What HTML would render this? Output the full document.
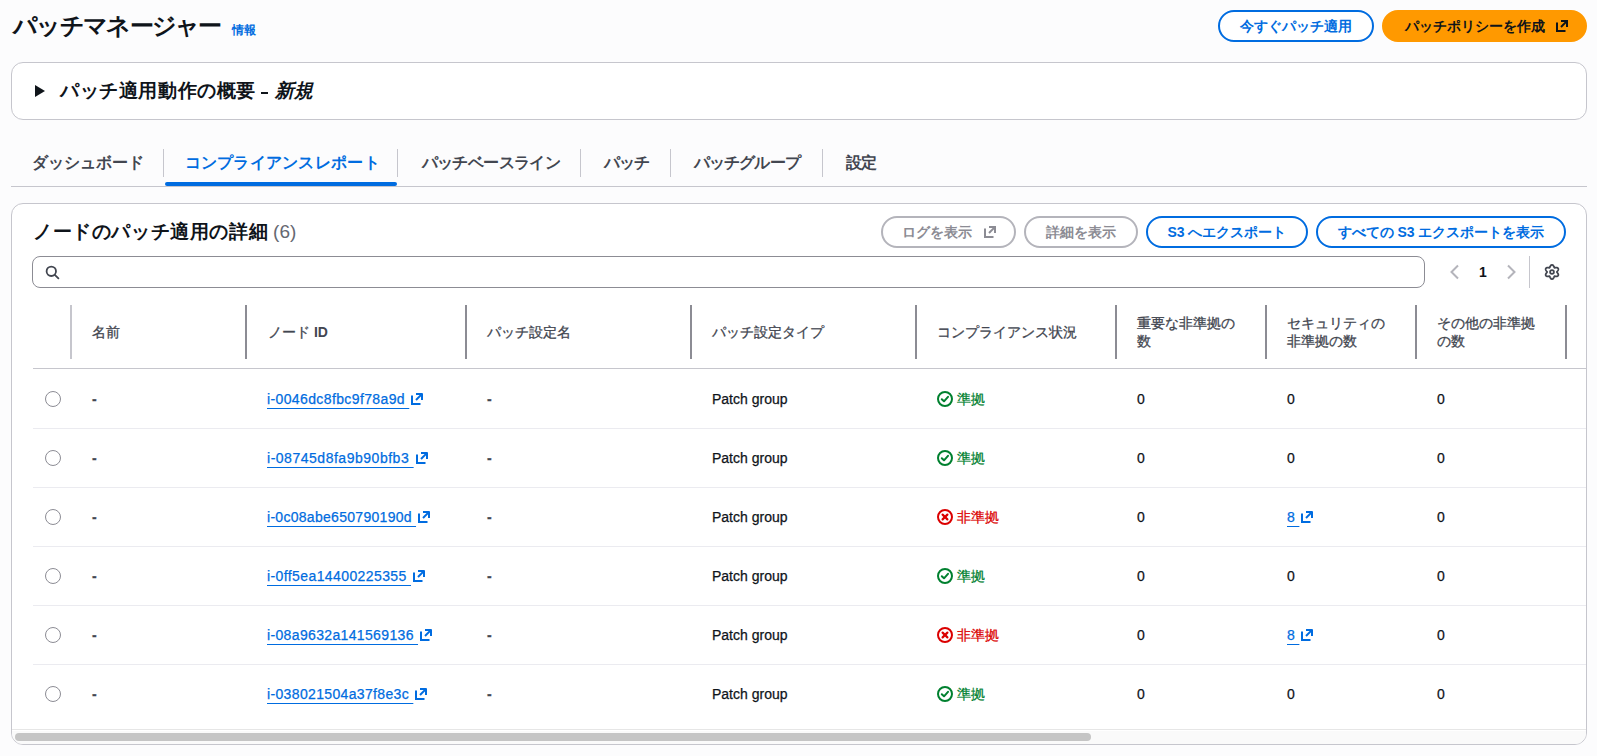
<!DOCTYPE html>
<html lang="ja">
<head>
<meta charset="utf-8">
<style>
*{box-sizing:border-box;margin:0;padding:0}
html,body{width:1597px;height:756px;overflow:hidden;background:#fcfcfd;font-family:"Liberation Sans",sans-serif;color:#0f141a}
.abs{position:absolute;white-space:nowrap}
.title{left:13px;top:12px;font-size:24px;font-weight:700;line-height:28px;color:#0f141a;letter-spacing:-1.7px}
.info{left:232px;top:22px;font-size:12px;font-weight:700;color:#006ce0;line-height:16px}
.btn{position:absolute;height:32px;border-radius:16px;border:2px solid #006ce0;color:#006ce0;font-size:14px;font-weight:700;line-height:28px;text-align:center;background:#fff;white-space:nowrap}
.btn.primary{background:#ff9900;border-color:#ff9900;color:#0f141a}
.btn.dis{border-color:#b4b4bb;color:#8c8c94;background:#fff}
.btn .ext{vertical-align:-1px}
.box{position:absolute;background:#fff;border:1px solid #c6c6cd;border-radius:12px}
.exp{left:11px;top:62px;width:1576px;height:58px}
.tri{position:absolute;left:35px;top:85px;width:0;height:0;border-top:6px solid transparent;border-bottom:6px solid transparent;border-left:10px solid #0f141a}
.h2{font-size:19px;font-weight:700;line-height:24px;color:#0f141a;letter-spacing:0.6px}
.tab{position:absolute;top:151px;font-size:16px;font-weight:700;color:#424650;line-height:24px;white-space:nowrap}
.tab.act{color:#006ce0}
.tabdiv{position:absolute;top:149px;width:1px;height:28px;background:#c6c6cd}
.tabline{position:absolute;left:11px;top:186px;width:1576px;height:1px;background:#c6c6cd}
.tabul{position:absolute;left:165px;top:182px;width:232px;height:4px;border-radius:2px;background:#006ce0}
.main{left:11px;top:203px;width:1576px;height:542px;overflow:hidden}
.search{position:absolute;left:32px;top:256px;width:1393px;height:32px;border:1px solid #8c8c94;border-radius:8px;background:#fff}
.th{position:absolute;font-size:14px;font-weight:400;-webkit-text-stroke:0.3px #424650;color:#424650;line-height:18px;white-space:nowrap}
.cdiv{position:absolute;top:305px;width:2px;height:54px;background:#8c8c94}
.hline{position:absolute;left:33px;top:368px;width:1553px;height:1px;background:#c6c6cd}
.rline{position:absolute;left:33px;width:1553px;height:1px;background:#ebebf0}
.td{position:absolute;font-size:14px;line-height:20px;color:#0f141a;white-space:nowrap;-webkit-text-stroke:0.25px currentColor}
.td.lk{color:#006ce0}
.td .ext{vertical-align:-1px;margin-left:2px}
.radio{position:absolute;left:45px;width:16px;height:16px;border:1px solid #8c8c94;border-radius:50%;background:#fff}
.lnk{color:#006ce0;text-decoration:underline;text-underline-offset:4px;letter-spacing:0.35px}
.st svg{vertical-align:-3px;margin-right:4px}
.st.ok{color:#00802f}
.st.ng{color:#db0000}
.sbar{position:absolute;left:12px;top:729px;width:1574px;height:15px;border-top:1px solid #e6e6e6;background:linear-gradient(#fff 0,#fff 1px,#fafafa 1px);border-radius:0 0 11px 11px}
.sthumb{position:absolute;left:15px;top:733px;width:1076px;height:8px;border-radius:4px;background:#c5c5c5}
.td.dash{font-weight:700;color:#424650}

</style>
</head>
<body>

<div class="abs title">パッチマネージャー</div>
<div class="abs info">情報</div>
<div class="btn" style="left:1218px;top:10px;width:156px">今すぐパッチ適用</div>
<div class="btn primary" style="left:1382px;top:10px;width:205px;text-align:left;padding-left:20.5px">パッチポリシーを作成<svg class="ext" style="margin-left:11px" width="12" height="12" viewBox="0 0 12 12"><path d="M1 2.5V11H9.5" fill="none" stroke="currentColor" stroke-width="2"/><path d="M5 1H11V7" fill="none" stroke="currentColor" stroke-width="2"/><path d="M10.6 1.4L5 7" fill="none" stroke="currentColor" stroke-width="2"/></svg></div>

<div class="box exp"></div>
<div class="tri"></div>
<div class="abs h2" style="left:60px;top:79px">パッチ適用動作の概要<span style="display:inline-block;width:6.5px;height:2.5px;background:#0f141a;vertical-align:3px;margin:0 7px 0 5px"></span><i>新規</i></div>

<div class="tab" style="left:31.5px">ダッシュボード</div>
<div class="tabdiv" style="left:163px"></div>
<div class="tab act" style="left:184.5px;letter-spacing:0.28px">コンプライアンスレポート</div>
<div class="tabdiv" style="left:397px"></div>
<div class="tab" style="left:421.5px;letter-spacing:-0.58px">パッチベースライン</div>
<div class="tabdiv" style="left:580px"></div>
<div class="tab" style="left:604px;letter-spacing:-1px">パッチ</div>
<div class="tabdiv" style="left:670px"></div>
<div class="tab" style="left:693.5px;letter-spacing:-0.8px">パッチグループ</div>
<div class="tabdiv" style="left:822px"></div>
<div class="tab" style="left:845.5px;letter-spacing:-1px">設定</div>
<div class="tabline"></div>
<div class="tabul"></div>

<div class="box main"></div>
<div class="abs h2" style="left:33px;top:220px">ノードのパッチ適用の詳細 <span style="font-weight:400;color:#656871;letter-spacing:0;margin-left:-1px">(6)</span></div>
<div class="btn dis" style="left:881px;top:216px;width:135px;text-align:left;padding-left:19px">ログを表示<svg class="ext" style="margin-left:12px" width="12" height="12" viewBox="0 0 12 12"><path d="M1 2.5V11H9.5" fill="none" stroke="currentColor" stroke-width="2"/><path d="M5 1H11V7" fill="none" stroke="currentColor" stroke-width="2"/><path d="M10.6 1.4L5 7" fill="none" stroke="currentColor" stroke-width="2"/></svg></div>
<div class="btn dis" style="left:1024px;top:216px;width:114px">詳細を表示</div>
<div class="btn" style="left:1146px;top:216px;width:162px">S3 へエクスポート</div>
<div class="btn" style="left:1316px;top:216px;width:250px">すべての S3 エクスポートを表示</div>
<div class="search"></div>
<svg class="abs" style="left:45px;top:265px" width="16" height="16" viewBox="0 0 16 16"><circle cx="6.3" cy="6.3" r="4.7" fill="none" stroke="#424650" stroke-width="1.8"/><path d="M9.8 9.8L13.4 13.4" stroke="#424650" stroke-width="1.8" stroke-linecap="round"/></svg>
<svg class="abs" style="left:1447px;top:264px" width="16" height="16" viewBox="0 0 16 16"><path d="M11 1.5L4.5 8L11 14.5" fill="none" stroke="#b4b4bb" stroke-width="2"/></svg>
<div class="abs" style="left:1479px;top:262px;font-size:14px;font-weight:700;line-height:20px;color:#0f141a">1</div>
<svg class="abs" style="left:1503px;top:264px" width="16" height="16" viewBox="0 0 16 16"><path d="M5 1.5L11.5 8L5 14.5" fill="none" stroke="#b4b4bb" stroke-width="2"/></svg>
<div class="abs" style="left:1529px;top:256px;width:1px;height:32px;background:#c6c6cd"></div>
<svg class="abs gear" style="left:1544px;top:264px;overflow:visible" width="16" height="16" viewBox="0 0 16 16"><path d="M12.90 8.00 L12.96 8.17 L13.07 8.35 L13.21 8.55 L13.37 8.75 L13.54 8.98 L13.71 9.21 L13.88 9.47 L14.03 9.73 L14.15 10.00 L14.25 10.27 L14.31 10.55 L14.33 10.82 L14.31 11.08 L14.25 11.32 L14.15 11.55 L14.00 11.75 L13.82 11.93 L13.61 12.07 L13.36 12.19 L13.09 12.27 L12.81 12.33 L12.51 12.35 L12.21 12.36 L11.91 12.34 L11.62 12.31 L11.34 12.27 L11.08 12.24 L10.84 12.21 L10.63 12.21 L10.45 12.24 L10.33 12.38 L10.23 12.56 L10.13 12.78 L10.03 13.03 L9.92 13.29 L9.80 13.55 L9.67 13.82 L9.52 14.08 L9.34 14.33 L9.15 14.55 L8.95 14.74 L8.72 14.89 L8.49 15.01 L8.25 15.08 L8.00 15.10 L7.75 15.08 L7.51 15.01 L7.28 14.89 L7.05 14.74 L6.85 14.55 L6.66 14.33 L6.48 14.08 L6.33 13.82 L6.20 13.55 L6.08 13.29 L5.97 13.03 L5.87 12.78 L5.77 12.56 L5.67 12.38 L5.55 12.24 L5.37 12.21 L5.16 12.21 L4.92 12.24 L4.66 12.27 L4.38 12.31 L4.09 12.34 L3.79 12.36 L3.49 12.35 L3.19 12.33 L2.91 12.27 L2.64 12.19 L2.39 12.07 L2.18 11.93 L2.00 11.75 L1.85 11.55 L1.75 11.32 L1.69 11.08 L1.67 10.82 L1.69 10.55 L1.75 10.27 L1.85 10.00 L1.97 9.73 L2.12 9.47 L2.29 9.21 L2.46 8.98 L2.63 8.75 L2.79 8.55 L2.93 8.35 L3.04 8.17 L3.10 8.00 L3.04 7.83 L2.93 7.65 L2.79 7.45 L2.63 7.25 L2.46 7.02 L2.29 6.79 L2.12 6.53 L1.97 6.27 L1.85 6.00 L1.75 5.73 L1.69 5.45 L1.67 5.18 L1.69 4.92 L1.75 4.68 L1.85 4.45 L2.00 4.25 L2.18 4.07 L2.39 3.93 L2.64 3.81 L2.91 3.73 L3.19 3.67 L3.49 3.65 L3.79 3.64 L4.09 3.66 L4.38 3.69 L4.66 3.73 L4.92 3.76 L5.16 3.79 L5.37 3.79 L5.55 3.76 L5.67 3.62 L5.77 3.44 L5.87 3.22 L5.97 2.97 L6.08 2.71 L6.20 2.45 L6.33 2.18 L6.48 1.92 L6.66 1.67 L6.85 1.45 L7.05 1.26 L7.28 1.11 L7.51 0.99 L7.75 0.92 L8.00 0.90 L8.25 0.92 L8.49 0.99 L8.72 1.11 L8.95 1.26 L9.15 1.45 L9.34 1.67 L9.52 1.92 L9.67 2.18 L9.80 2.45 L9.92 2.71 L10.03 2.97 L10.13 3.22 L10.23 3.44 L10.33 3.62 L10.45 3.76 L10.63 3.79 L10.84 3.79 L11.08 3.76 L11.34 3.73 L11.62 3.69 L11.91 3.66 L12.21 3.64 L12.51 3.65 L12.81 3.67 L13.09 3.73 L13.36 3.81 L13.61 3.93 L13.82 4.07 L14.00 4.25 L14.15 4.45 L14.25 4.68 L14.31 4.92 L14.33 5.18 L14.31 5.45 L14.25 5.73 L14.15 6.00 L14.03 6.27 L13.88 6.53 L13.71 6.79 L13.54 7.02 L13.37 7.25 L13.21 7.45 L13.07 7.65 L12.96 7.83Z" fill="none" stroke="#424650" stroke-width="1.8" stroke-linejoin="round"/><circle cx="8" cy="8" r="1.9" fill="none" stroke="#424650" stroke-width="1.8"/></svg>

<div class="th" style="left:92px;top:323px">名前</div>
<div class="th" style="left:268px;top:323px">ノード <b style="-webkit-text-stroke:0">ID</b></div>
<div class="th" style="left:487px;top:323px">パッチ設定名</div>
<div class="th" style="left:712px;top:323px">パッチ設定タイプ</div>
<div class="th" style="left:937px;top:323px">コンプライアンス状況</div>
<div class="th" style="left:1137px;top:314px">重要な非準拠の<br>数</div>
<div class="th" style="left:1287px;top:314px">セキュリティの<br>非準拠の数</div>
<div class="th" style="left:1437px;top:314px">その他の非準拠<br>の数</div>
<div class="cdiv" style="left:70px;background:#c6c6cd"></div>
<div class="cdiv" style="left:245px"></div>
<div class="cdiv" style="left:465px"></div>
<div class="cdiv" style="left:690px"></div>
<div class="cdiv" style="left:915px"></div>
<div class="cdiv" style="left:1115px"></div>
<div class="cdiv" style="left:1265px"></div>
<div class="cdiv" style="left:1415px"></div>
<div class="cdiv" style="left:1565px"></div>
<div class="hline"></div>

<div class="rline" style="top:428px"></div>
<div class="radio" style="top:391px"></div>
<div class="td dash" style="left:92px;top:389px">-</div>
<div class="td lk" style="left:267px;top:389px"><span class="lnk" style="letter-spacing:0.38px">i-0046dc8fbc9f78a9d </span><svg class="ext" width="12" height="12" viewBox="0 0 12 12"><path d="M1 2.5V11H9.5" fill="none" stroke="currentColor" stroke-width="2" stroke-linecap="butt"/><path d="M5 1H11V7" fill="none" stroke="currentColor" stroke-width="2" stroke-linejoin="round"/><path d="M10.6 1.4L5 7" fill="none" stroke="currentColor" stroke-width="2"/></svg></div>
<div class="td dash" style="left:487px;top:389px">-</div>
<div class="td" style="left:712px;top:389px">Patch group</div>
<div class="td st ok" style="left:937px;top:389px"><svg width="16" height="16" viewBox="0 0 16 16"><circle cx="8" cy="8" r="7" fill="none" stroke="currentColor" stroke-width="2"/><path d="M4.8 8.2L7 10.3L11 5.8" fill="none" stroke="currentColor" stroke-width="2" stroke-linecap="round" stroke-linejoin="round"/></svg><span>準拠</span></div>
<div class="td" style="left:1137px;top:389px">0</div>
<div class="td" style="left:1287px;top:389px">0</div>
<div class="td" style="left:1437px;top:389px">0</div>
<div class="rline" style="top:487px"></div>
<div class="radio" style="top:450px"></div>
<div class="td dash" style="left:92px;top:448px">-</div>
<div class="td lk" style="left:267px;top:448px"><span class="lnk" style="letter-spacing:0.52px">i-08745d8fa9b90bfb3 </span><svg class="ext" width="12" height="12" viewBox="0 0 12 12"><path d="M1 2.5V11H9.5" fill="none" stroke="currentColor" stroke-width="2" stroke-linecap="butt"/><path d="M5 1H11V7" fill="none" stroke="currentColor" stroke-width="2" stroke-linejoin="round"/><path d="M10.6 1.4L5 7" fill="none" stroke="currentColor" stroke-width="2"/></svg></div>
<div class="td dash" style="left:487px;top:448px">-</div>
<div class="td" style="left:712px;top:448px">Patch group</div>
<div class="td st ok" style="left:937px;top:448px"><svg width="16" height="16" viewBox="0 0 16 16"><circle cx="8" cy="8" r="7" fill="none" stroke="currentColor" stroke-width="2"/><path d="M4.8 8.2L7 10.3L11 5.8" fill="none" stroke="currentColor" stroke-width="2" stroke-linecap="round" stroke-linejoin="round"/></svg><span>準拠</span></div>
<div class="td" style="left:1137px;top:448px">0</div>
<div class="td" style="left:1287px;top:448px">0</div>
<div class="td" style="left:1437px;top:448px">0</div>
<div class="rline" style="top:546px"></div>
<div class="radio" style="top:509px"></div>
<div class="td dash" style="left:92px;top:507px">-</div>
<div class="td lk" style="left:267px;top:507px"><span class="lnk" style="letter-spacing:0.29px">i-0c08abe650790190d </span><svg class="ext" width="12" height="12" viewBox="0 0 12 12"><path d="M1 2.5V11H9.5" fill="none" stroke="currentColor" stroke-width="2" stroke-linecap="butt"/><path d="M5 1H11V7" fill="none" stroke="currentColor" stroke-width="2" stroke-linejoin="round"/><path d="M10.6 1.4L5 7" fill="none" stroke="currentColor" stroke-width="2"/></svg></div>
<div class="td dash" style="left:487px;top:507px">-</div>
<div class="td" style="left:712px;top:507px">Patch group</div>
<div class="td st ng" style="left:937px;top:507px"><svg width="16" height="16" viewBox="0 0 16 16"><circle cx="8" cy="8" r="7" fill="none" stroke="currentColor" stroke-width="2"/><path d="M5.6 5.6L10.4 10.4M10.4 5.6L5.6 10.4" fill="none" stroke="currentColor" stroke-width="2.2" stroke-linecap="round"/></svg><span>非準拠</span></div>
<div class="td" style="left:1137px;top:507px">0</div>
<div class="td lk" style="left:1287px;top:507px"><span class="lnk">8 </span><svg class="ext" width="12" height="12" viewBox="0 0 12 12"><path d="M1 2.5V11H9.5" fill="none" stroke="currentColor" stroke-width="2" stroke-linecap="butt"/><path d="M5 1H11V7" fill="none" stroke="currentColor" stroke-width="2" stroke-linejoin="round"/><path d="M10.6 1.4L5 7" fill="none" stroke="currentColor" stroke-width="2"/></svg></div>
<div class="td" style="left:1437px;top:507px">0</div>
<div class="rline" style="top:605px"></div>
<div class="radio" style="top:568px"></div>
<div class="td dash" style="left:92px;top:566px">-</div>
<div class="td lk" style="left:267px;top:566px"><span class="lnk" style="letter-spacing:0.4px">i-0ff5ea14400225355 </span><svg class="ext" width="12" height="12" viewBox="0 0 12 12"><path d="M1 2.5V11H9.5" fill="none" stroke="currentColor" stroke-width="2" stroke-linecap="butt"/><path d="M5 1H11V7" fill="none" stroke="currentColor" stroke-width="2" stroke-linejoin="round"/><path d="M10.6 1.4L5 7" fill="none" stroke="currentColor" stroke-width="2"/></svg></div>
<div class="td dash" style="left:487px;top:566px">-</div>
<div class="td" style="left:712px;top:566px">Patch group</div>
<div class="td st ok" style="left:937px;top:566px"><svg width="16" height="16" viewBox="0 0 16 16"><circle cx="8" cy="8" r="7" fill="none" stroke="currentColor" stroke-width="2"/><path d="M4.8 8.2L7 10.3L11 5.8" fill="none" stroke="currentColor" stroke-width="2" stroke-linecap="round" stroke-linejoin="round"/></svg><span>準拠</span></div>
<div class="td" style="left:1137px;top:566px">0</div>
<div class="td" style="left:1287px;top:566px">0</div>
<div class="td" style="left:1437px;top:566px">0</div>
<div class="rline" style="top:664px"></div>
<div class="radio" style="top:627px"></div>
<div class="td dash" style="left:92px;top:625px">-</div>
<div class="td lk" style="left:267px;top:625px"><span class="lnk" style="letter-spacing:0.35px">i-08a9632a141569136 </span><svg class="ext" width="12" height="12" viewBox="0 0 12 12"><path d="M1 2.5V11H9.5" fill="none" stroke="currentColor" stroke-width="2" stroke-linecap="butt"/><path d="M5 1H11V7" fill="none" stroke="currentColor" stroke-width="2" stroke-linejoin="round"/><path d="M10.6 1.4L5 7" fill="none" stroke="currentColor" stroke-width="2"/></svg></div>
<div class="td dash" style="left:487px;top:625px">-</div>
<div class="td" style="left:712px;top:625px">Patch group</div>
<div class="td st ng" style="left:937px;top:625px"><svg width="16" height="16" viewBox="0 0 16 16"><circle cx="8" cy="8" r="7" fill="none" stroke="currentColor" stroke-width="2"/><path d="M5.6 5.6L10.4 10.4M10.4 5.6L5.6 10.4" fill="none" stroke="currentColor" stroke-width="2.2" stroke-linecap="round"/></svg><span>非準拠</span></div>
<div class="td" style="left:1137px;top:625px">0</div>
<div class="td lk" style="left:1287px;top:625px"><span class="lnk">8 </span><svg class="ext" width="12" height="12" viewBox="0 0 12 12"><path d="M1 2.5V11H9.5" fill="none" stroke="currentColor" stroke-width="2" stroke-linecap="butt"/><path d="M5 1H11V7" fill="none" stroke="currentColor" stroke-width="2" stroke-linejoin="round"/><path d="M10.6 1.4L5 7" fill="none" stroke="currentColor" stroke-width="2"/></svg></div>
<div class="td" style="left:1437px;top:625px">0</div>
<div class="radio" style="top:686px"></div>
<div class="td dash" style="left:92px;top:684px">-</div>
<div class="td lk" style="left:267px;top:684px"><span class="lnk" style="letter-spacing:0.35px">i-038021504a37f8e3c </span><svg class="ext" width="12" height="12" viewBox="0 0 12 12"><path d="M1 2.5V11H9.5" fill="none" stroke="currentColor" stroke-width="2" stroke-linecap="butt"/><path d="M5 1H11V7" fill="none" stroke="currentColor" stroke-width="2" stroke-linejoin="round"/><path d="M10.6 1.4L5 7" fill="none" stroke="currentColor" stroke-width="2"/></svg></div>
<div class="td dash" style="left:487px;top:684px">-</div>
<div class="td" style="left:712px;top:684px">Patch group</div>
<div class="td st ok" style="left:937px;top:684px"><svg width="16" height="16" viewBox="0 0 16 16"><circle cx="8" cy="8" r="7" fill="none" stroke="currentColor" stroke-width="2"/><path d="M4.8 8.2L7 10.3L11 5.8" fill="none" stroke="currentColor" stroke-width="2" stroke-linecap="round" stroke-linejoin="round"/></svg><span>準拠</span></div>
<div class="td" style="left:1137px;top:684px">0</div>
<div class="td" style="left:1287px;top:684px">0</div>
<div class="td" style="left:1437px;top:684px">0</div>
<div class="sbar"></div>
<div class="sthumb"></div>
</body>
</html>
